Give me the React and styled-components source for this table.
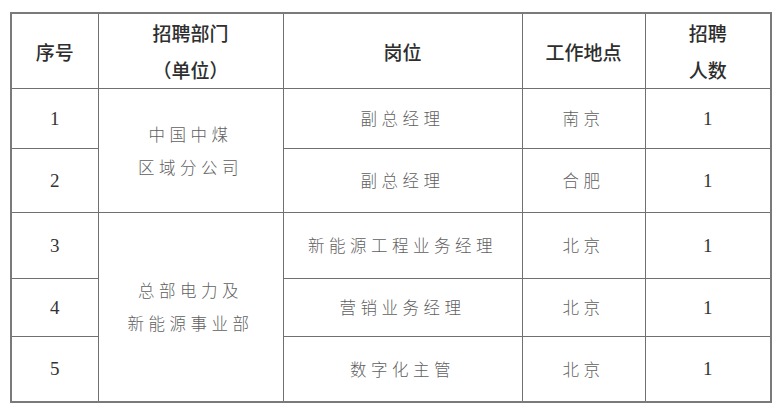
import React from "react";
import styled, { createGlobalStyle } from "styled-components";

const Global = createGlobalStyle`
  html, body { margin: 0; padding: 0; background: #ffffff; }
  body { width: 778px; height: 411px; overflow: hidden; }
`;

const Page = styled.div`
  padding: 12px 0 0 10px;
  background: #fff;
`;

const Table = styled.table`
  border-collapse: collapse;
  table-layout: fixed;
  width: 760px;
  border: 2px solid #7a7a7a;
`;

const Cell = styled.td`
  border: 1.5px solid #707070;
  text-align: center;
  vertical-align: middle;
  padding: 0;
  height: ${(p) => p.$h || 60}px;
  color: #5f5f5f;
  font-family: "Noto Sans CJK SC", sans-serif;
  font-weight: 300;
  font-size: 16.5px;
  letter-spacing: ${(p) => (p.$spaced ? "4.5px" : "0")};
  line-height: 33px;
`;

const HeadCell = styled.th`
  border: 1.5px solid #707070;
  text-align: center;
  vertical-align: middle;
  padding: 0;
  height: 74px;
  color: #2e2e2e;
  font-family: "Noto Sans CJK SC", sans-serif;
  font-weight: 500;
  font-size: 19px;
  line-height: 37px;
`;

const Num = styled.td`
  border: 1.5px solid #707070;
  text-align: center;
  vertical-align: middle;
  padding: 0;
  height: ${(p) => p.$h || 60}px;
  color: #333;
  font-family: "Liberation Serif", serif;
  font-size: 19px;
`;

const rows = [
  { no: 1, post: "副总经理", city: "南京", n: 1, h: 59 },
  { no: 2, post: "副总经理", city: "合肥", n: 1, h: 63 },
  { no: 3, post: "新能源工程业务经理", city: "北京", n: 1, h: 65 },
  { no: 4, post: "营销业务经理", city: "北京", n: 1, h: 57 },
  { no: 5, post: "数字化主管", city: "北京", n: 1, h: 64 },
];

const depts = {
  1: { span: 2, lines: ["中国中煤", "区域分公司"] },
  3: { span: 3, lines: ["总部电力及", "新能源事业部"] },
};

export default function App() {
  return (
    <>
      <Global />
      <Page>
        <Table>
          <colgroup>
            <col style={{ width: 87 }} />
            <col style={{ width: 185 }} />
            <col style={{ width: 239 }} />
            <col style={{ width: 123 }} />
            <col style={{ width: 126 }} />
          </colgroup>
          <thead>
            <tr>
              <HeadCell>序号</HeadCell>
              <HeadCell>
                招聘部门
                <br />
                （单位）
              </HeadCell>
              <HeadCell>岗位</HeadCell>
              <HeadCell>工作地点</HeadCell>
              <HeadCell>
                招聘
                <br />
                人数
              </HeadCell>
            </tr>
          </thead>
          <tbody>
            {rows.map((r) => (
              <tr key={r.no}>
                <Num $h={r.h}>{r.no}</Num>
                {depts[r.no] && (
                  <Cell rowSpan={depts[r.no].span} $spaced>
                    {depts[r.no].lines[0]}
                    <br />
                    {depts[r.no].lines[1]}
                  </Cell>
                )}
                <Cell $h={r.h} $spaced>{r.post}</Cell>
                <Cell $h={r.h} $spaced>{r.city}</Cell>
                <Num $h={r.h}>{r.n}</Num>
              </tr>
            ))}
          </tbody>
        </Table>
      </Page>
    </>
  );
}
